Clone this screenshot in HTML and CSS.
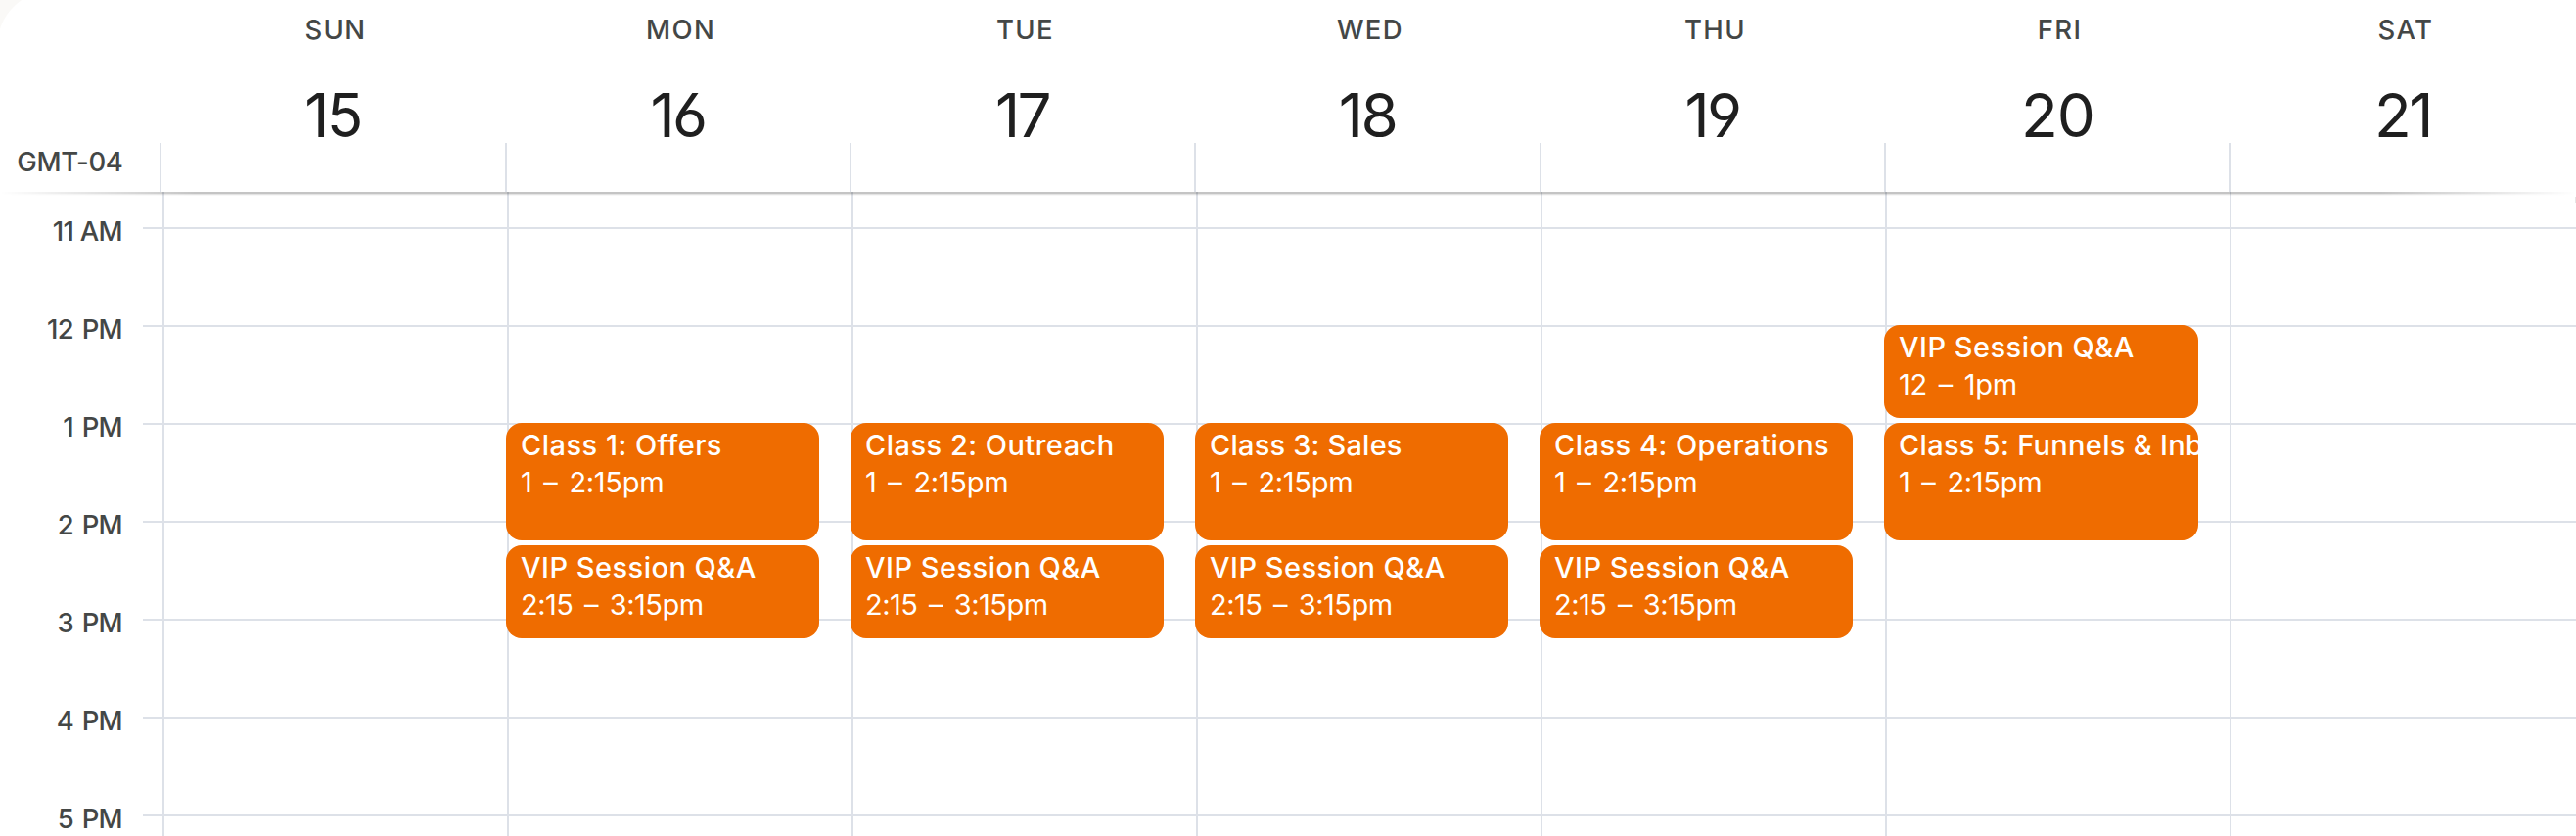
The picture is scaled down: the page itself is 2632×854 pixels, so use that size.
FILE: index.html
```html
<!DOCTYPE html>
<html lang="en">
<head>
<meta charset="utf-8">
<title>Calendar week</title>
<link rel="stylesheet" href="styles.css">
</head>
<body>
<main class="calendar">
  <header class="head">
    <div class="zone">GMT-04</div>
    <div class="day"><span class="name">SUN</span><span class="date">15</span></div>
    <div class="day"><span class="name">MON</span><span class="date">16</span></div>
    <div class="day"><span class="name">TUE</span><span class="date">17</span></div>
    <div class="day"><span class="name">WED</span><span class="date">18</span></div>
    <div class="day"><span class="name">THU</span><span class="date">19</span></div>
    <div class="day"><span class="name">FRI</span><span class="date wide">20</span></div>
    <div class="day"><span class="name">SAT</span><span class="date">21</span></div>
  </header>
  <section class="body">
    <div class="times">
      <span class="eleven">11 AM</span><span>12 PM</span><span>1 PM</span><span>2 PM</span><span>3 PM</span><span>4 PM</span><span>5 PM</span>
    </div>
    <div class="ticks"></div>
    <div class="col"></div>
    <div class="col one">
      <article class="event long"><b>Class 1: Offers</b><span class="t1">1 – 2:15pm</span></article>
      <article class="event"><b>VIP Session Q&amp;A</b><span class="t2">2:15 – 3:15pm</span></article>
    </div>
    <div class="col one">
      <article class="event long"><b>Class 2: Outreach</b><span class="t1">1 – 2:15pm</span></article>
      <article class="event"><b>VIP Session Q&amp;A</b><span class="t2">2:15 – 3:15pm</span></article>
    </div>
    <div class="col one">
      <article class="event long"><b class="sales">Class 3: Sales</b><span class="t1">1 – 2:15pm</span></article>
      <article class="event"><b>VIP Session Q&amp;A</b><span class="t2">2:15 – 3:15pm</span></article>
    </div>
    <div class="col one">
      <article class="event long"><b>Class 4: Operations</b><span class="t1">1 – 2:15pm</span></article>
      <article class="event"><b>VIP Session Q&amp;A</b><span class="t2">2:15 – 3:15pm</span></article>
    </div>
    <div class="col noon">
      <article class="event"><b>VIP Session Q&amp;A</b><span class="t3">12 – 1pm</span></article>
      <article class="event long"><b class="funnels">Class 5: Funnels &amp; Inb</b><span class="t1">1 – 2:15pm</span></article>
    </div>
    <div class="col"></div>
  </section>
</main>
</body>
</html>
```
FILE: styles.css
```css
* { box-sizing: border-box; }
body { margin: 0; background: #fff; font-family: Inter, Roboto, sans-serif; color: #444746; }
.calendar { width: 2632px; height: 854px; overflow: hidden;
  background: radial-gradient(circle at 53.8px 46.9px, #fff 56px, #faf9f7 57px) 0 0 / 46px 42px no-repeat #fff; }
.head { position: relative; display: grid; grid-template-columns: 163px 353px repeat(2, 352px) 353px repeat(2, 352px) 1fr; height: 196px; }
.head::after { content: ""; position: absolute; z-index: 2; left: 0; right: 0; top: 196px; height: 4px;
  background: linear-gradient(rgba(0, 0, 0, .23) 0 2px, rgba(0, 0, 0, .11) 2px 3px, rgba(0, 0, 0, .03) 3px);
  -webkit-mask-image: linear-gradient(90deg, transparent, #000 200px, #000 calc(100% - 200px), transparent);
  mask-image: linear-gradient(90deg, transparent, #000 200px, #000 calc(100% - 200px), transparent); }
.zone { padding: 149px 37.5px 0 0; text-align: right; font-size: 27.5px; font-weight: 500; line-height: 32px; white-space: nowrap; letter-spacing: -.35px; }
.day { display: flex; flex-direction: column; align-items: center; padding: 14px 0 0 7px;
  background: linear-gradient(#dde1e8, #dde1e8) 0 146px / 2px 50px no-repeat; }
.name { font-size: 27.5px; line-height: 32px; font-weight: 500; letter-spacing: 1.4px; }
.date { margin: 40px 6px 0 0; line-height: 64px; font-size: 62px; letter-spacing: -2.6px; color: #1f1f1f; font-feature-settings: "ss01"; }
.wide { letter-spacing: -1px; margin-right: 4px; }
.body { display: grid; grid-template-columns: 146px 20px repeat(7, 352px); height: 658px;
  background: linear-gradient(#e6e6e6, #e6e6e6) 100% 5px / 1px 6px no-repeat,
    repeating-linear-gradient(#dde1e8 0 2px, transparent 2px 100px) 146px 36px no-repeat; }
.times { display: flex; flex-direction: column; padding: 24px 21px 0 0; text-align: right; }
.times span { flex: none; height: 100px; line-height: 32px; font-size: 27.5px; font-weight: 500; letter-spacing: -.7px; word-spacing: 2px; white-space: nowrap; }
.times .eleven { word-spacing: 0; }
.col { display: flex; flex-direction: column; gap: 5px; border-left: 2px solid #dde1e8; }
.one { padding-top: 236px; }
.noon { padding-top: 136px; }
.event { flex: none; width: 320px; height: 95px; margin-left: -3px; padding: 4px 0 0 15px; border-radius: 16px; background: #ef6c00; color: #fff; overflow: hidden; white-space: nowrap; }
.noon .event { width: 321px; }
.long { height: 120px; }
.event b, .event span { display: block; line-height: 38px; font-size: 29px; }
.event b { font-weight: 500; letter-spacing: .48px; }
.event .sales { letter-spacing: .2px; }
.event .funnels { letter-spacing: .3px; }
.event span { font-weight: 400; word-spacing: 4px; letter-spacing: -.3px; }
.event .t2 { letter-spacing: -.5px; }
```
